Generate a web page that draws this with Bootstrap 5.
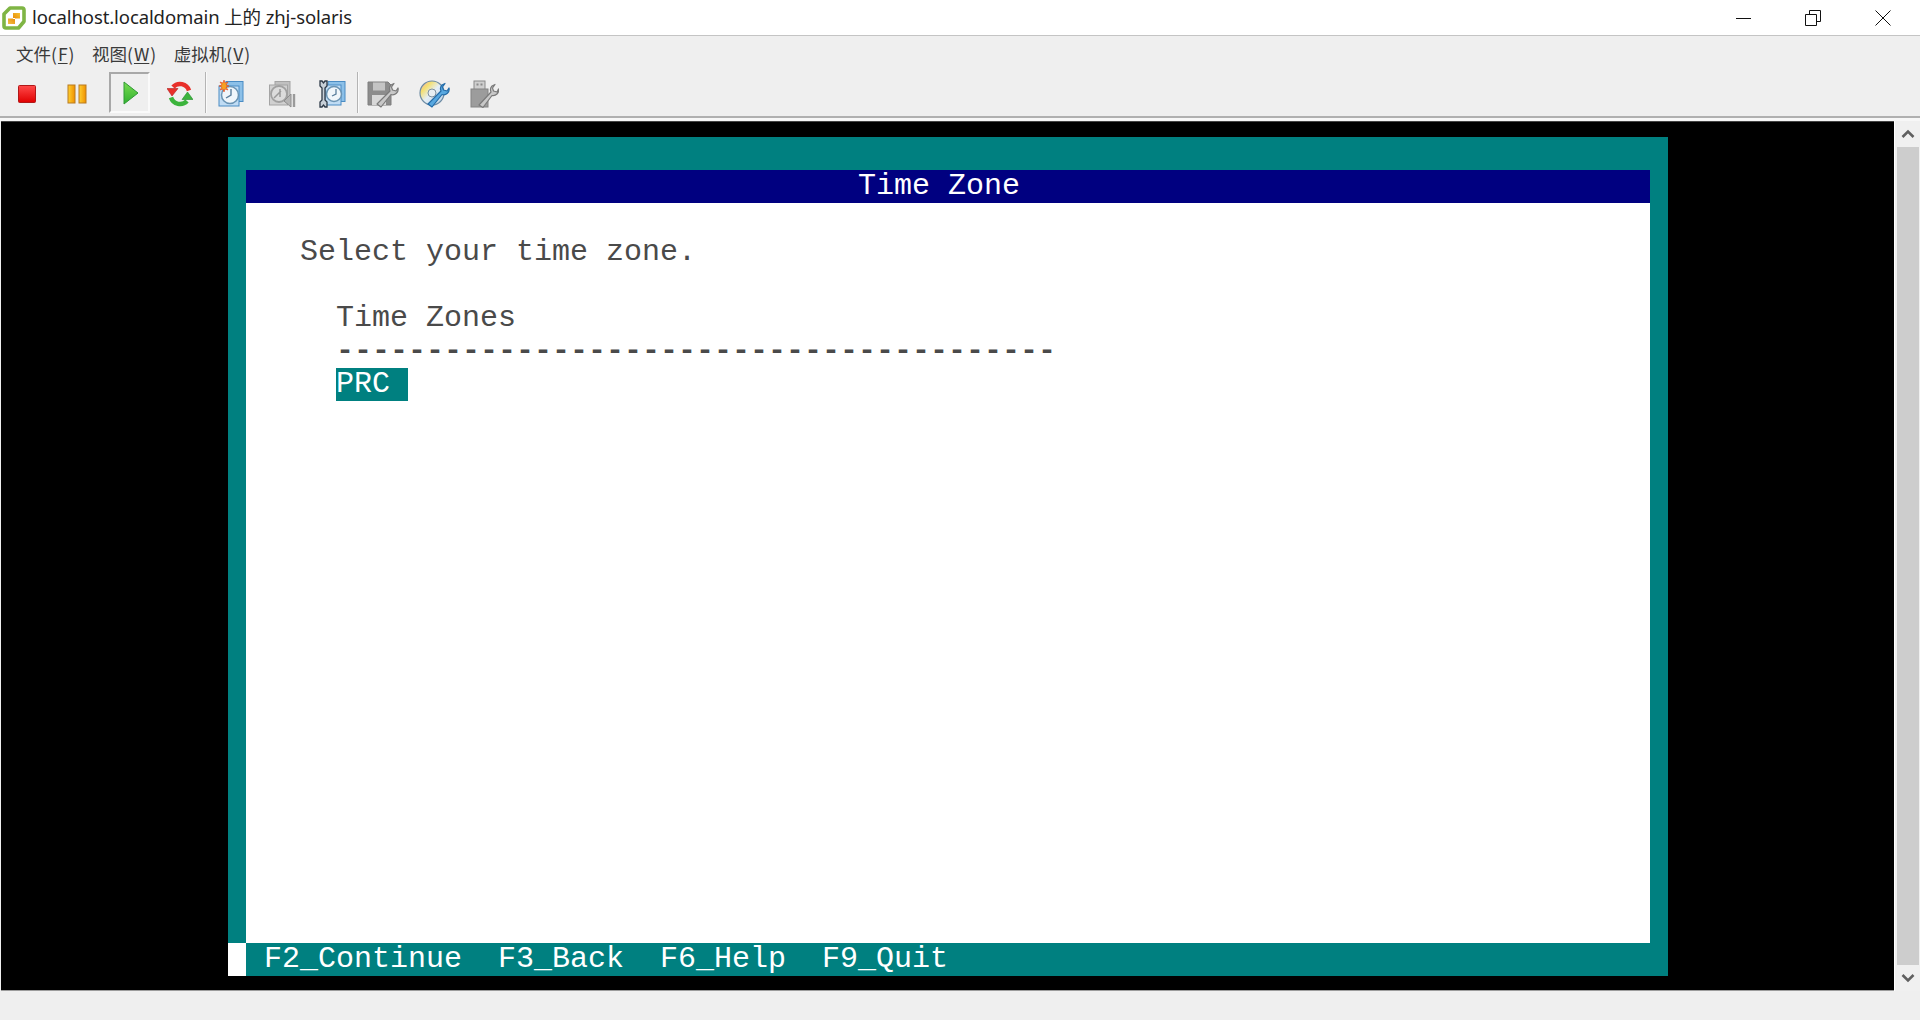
<!DOCTYPE html>
<html lang="zh-CN">
<head>
<meta charset="utf-8">
<title>localhost.localdomain 上的 zhj-solaris</title>
<link href="https://cdn.jsdelivr.net/npm/bootstrap@5.3.0/dist/css/bootstrap.min.css" rel="stylesheet">
<style>
html,body{height:100%;margin:0;overflow:hidden;background:#efefef}
.app-win{height:1020px;width:1920px}
.title-strip{height:36px;background:#fff;border-bottom:1px solid #c4c4c4}
.title-text{font:18.5px/1 "Noto Sans","Noto Sans CJK SC",sans-serif;color:#222;margin-left:6px;letter-spacing:-.1px}
.app-ico{margin-left:2px}
.win-ctl{width:70px;height:35px}
.win-set{margin-right:2px}
.menu-strip{height:36px;background:#efefef;padding-left:16px;gap:17.500px}
.menu-lbl{font:17.5px/26px "Noto Sans CJK SC",sans-serif;color:#3a3a3a}
.menu-lbl u{text-underline-offset:2px;padding:0 1px}
.tool-strip{height:44px;background:#efefef;padding-left:6px;gap:9.5px;padding-bottom:3px}
.tool-btn{width:41px;height:41px;padding-top:3px}
.tool-on{border:2px solid;border-color:#a8a8a8 #fafafa #fafafa #a8a8a8;margin-left:2px;padding:1px 0 0 3px}
.tool-sep{width:2px;height:41px;background:#b4b4b4;border-right:1px solid #fafafa;margin:0 -5.500px 0 -5.500px}
.rule-a{height:2px;background:#b0b0b0}
.rule-b{height:3px;background:#f7f7f7}
.work-area{height:870px;background:#000;margin-left:1px;border-bottom:1px solid #9c9c9c;border-top:1px solid #444}
.term-wrap{width:1893px;padding:15px 0 0 227px}
.term-box{width:1440px;height:839px;background:#008080}
.term-cap{height:33px}
.term-title{height:33px;margin:0 18px;background:#000080;color:#fff;padding-left:612px}
.term-page{height:740px;margin:0 18px;background:#fff;color:#4a4a4a}
.term-row{height:33px;white-space:pre}
.term-foot{height:33px;color:#fff}
.term-cell{width:18px;height:33px;background:#fff}
.term-keys{padding-left:18px;white-space:pre}
.term-title,.term-row,.term-keys{font:30px/33px "Liberation Mono",monospace}
.term-row.term-dash{font-weight:700}
.term-pick{display:inline-block;width:72px;height:33px;background:#008080;color:#fff}
.col-two{margin-left:90px}
.row-one{margin-left:54px}
.scroll-col{width:26px;background:#f0f0f0;border-left:1px solid #fff}
.scroll-top{height:26px}
.scroll-end{height:26px}
.scroll-thumb{background:#cdcdcd;margin:0 1px 0 2px}
.status-strip{height:29px;background:#efefef}
</style>
</head>
<body>
<div class="app-win d-flex flex-column">
  <div class="title-strip d-flex align-items-center">
    <svg class="app-ico" width="24" height="24" viewBox="0 0 24 24"><defs><linearGradient id="ga" x1="0" y1="1" x2="1" y2="0"><stop offset="0" stop-color="#f4c24a"/><stop offset=".5" stop-color="#e8900c"/><stop offset="1" stop-color="#f8c030"/></linearGradient></defs><path d="M8 2H20a2 2 0 0 1 2 2V15.500L16.500 22H4a2 2 0 0 1-2-2V8z" fill="#fff" stroke="#7fb544" stroke-width="3.600" stroke-linejoin="round"/><path d="M6 12.500h5V7h7v5.500h-5V18H6z" fill="url(#ga)"/><path d="M11 12.500l2 0" stroke="#fff" stroke-width="1"/></svg>
    <span class="title-text">localhost.localdomain 上的 zhj-solaris</span>
    <div class="ms-auto d-flex win-set">
      <div class="win-ctl d-flex align-items-center justify-content-center"><svg width="16" height="16" viewBox="0 0 16 16"><path d="M1 8.500h15" stroke="#111" fill="none"/></svg></div>
      <div class="win-ctl d-flex align-items-center justify-content-center"><svg width="16" height="16" viewBox="0 0 16 16"><path d="M.5 4.500h11v11H.5zM4.500 4.500V.5h11v11h-4" stroke="#111" fill="none"/></svg></div>
      <div class="win-ctl d-flex align-items-center justify-content-center"><svg width="16" height="16" viewBox="0 0 16 16"><path d="M.5.5l15 15M15.500.5l-15 15" stroke="#111" fill="none"/></svg></div>
    </div>
  </div>
  <div class="menu-strip d-flex align-items-center">
    <span class="menu-lbl">文件(<u>F</u>)</span>
    <span class="menu-lbl">视图(<u>W</u>)</span>
    <span class="menu-lbl">虚拟机(<u>V</u>)</span>
  </div>
  <div class="tool-strip d-flex align-items-center">
    <div class="tool-btn d-flex align-items-center justify-content-center"><svg width="18" height="18" viewBox="0 0 18 18"><defs><linearGradient id="gr" x1="0" y1="0" x2="0" y2="1"><stop offset="0" stop-color="#ff4a4a"/><stop offset="1" stop-color="#e00000"/></linearGradient></defs><rect x=".5" y=".5" width="17" height="17" rx="1" fill="url(#gr)" stroke="#b01818"/></svg></div>
    <div class="tool-btn d-flex align-items-center justify-content-center"><svg width="20" height="20" viewBox="0 0 20 20"><defs><linearGradient id="go" x1="0" y1="0" x2="1" y2="0"><stop offset="0" stop-color="#ffd030"/><stop offset="1" stop-color="#f09000"/></linearGradient></defs><rect x="1" y="1" width="7" height="18" fill="url(#go)" stroke="#b87a20"/><rect x="12" y="1" width="7" height="18" fill="url(#go)" stroke="#b87a20"/></svg></div>
    <div class="tool-btn tool-on d-flex align-items-center justify-content-center"><svg width="18" height="24" viewBox="0 0 18 24"><defs><linearGradient id="gg" x1="0" y1="0" x2="0" y2="1"><stop offset="0" stop-color="#78dc50"/><stop offset="1" stop-color="#30b030"/></linearGradient></defs><path d="M2 1l14 11L2 23z" fill="url(#gg)" stroke="#2f9a35" stroke-linejoin="round"/></svg></div>
    <div class="tool-btn d-flex align-items-center justify-content-center"><svg width="26" height="26" viewBox="0 0 26 26"><path d="M22 9.500A9.500 9.500 0 0 0 6 6" fill="none" stroke="#e8302a" stroke-width="4.500"/><path d="M0 7.500H11L5 15z" fill="#e8302a" stroke="#b02020" stroke-width=".6"/><path d="M4 16.500A9.500 9.500 0 0 0 20 20" fill="none" stroke="#3cb43c" stroke-width="4.500"/><path d="M15 18.500H26L20.500 11z" fill="#3cb43c" stroke="#208a28" stroke-width=".6"/></svg></div>
    <div class="tool-sep"></div>
    <div class="tool-btn d-flex align-items-center justify-content-center"><svg width="28" height="28" viewBox="0 0 28 28"><rect x="9" y="1.500" width="17" height="20" fill="#8cc0e8" stroke="#4a8cc4"/><rect x="2" y="6" width="20" height="20" fill="#c0dcf4" stroke="#4a8cc4"/><circle cx="13" cy="15" r="8.500" fill="#f0f6fb" stroke="#6a94b4" stroke-width="1.500"/><path d="M14 9v6l-5 3" fill="none" stroke="#5a7e9c" stroke-width="1.400"/><path d="M7 0l1 3 3-1-2 3 3 1-3 1 2 3-3-1-1 3-1-3-3 1 2-3-3-1 3-1-2-3 3 1z" fill="#f6a020" stroke="#e04020" stroke-width=".6"/></svg></div>
    <div class="tool-btn d-flex align-items-center justify-content-center"><svg width="28" height="28" viewBox="0 0 28 28"><rect x="7" y="1.500" width="15" height="20" fill="#c0c0c0" stroke="#a4a4a4"/><rect x="1.500" y="5" width="18" height="20" fill="#d0d0d0" stroke="#a4a4a4"/><circle cx="11" cy="14" r="8" fill="#dcdcdc" stroke="#a0a0a0" stroke-width="1.800"/><path d="M6 18l7-7M12 9v8" stroke="#9a9a9a" stroke-width="1.500" fill="none"/><path d="M16 21L23 14V27z" fill="#b4b4b4" stroke="#8e8e8e"/><path d="M26 14V27" stroke="#9a9a9a" stroke-width="2.400"/></svg></div>
    <div class="tool-btn d-flex align-items-center justify-content-center"><svg width="28" height="28" viewBox="0 0 28 28"><rect x="10" y="1.500" width="17" height="20" fill="#8cc0e8" stroke="#4a8cc4"/><rect x="7" y="5" width="16" height="20" fill="#c0dcf4" stroke="#4a8cc4"/><circle cx="16" cy="14" r="7.500" fill="#f0f6fb" stroke="#6a94b4" stroke-width="1.500"/><path d="M18 9v5l-4 2" fill="none" stroke="#5a7e9c" stroke-width="1.300"/><path d="M2 1h2l1.500 2L7 1h2v5L7 8v12l2 2v5H7l-1.500-2L4 27H2v-5l2-2V8L2 6z" fill="#c8d0d8" stroke="#2e3a48" stroke-width="1.300"/></svg></div>
    <div class="tool-sep"></div>
    <div class="tool-btn d-flex align-items-center justify-content-center"><svg width="32" height="28" viewBox="0 0 32 28"><path d="M1 2h20l3 3v20H1z" fill="#8c8c8c" stroke="#7e7e7e"/><rect x="6" y="2.500" width="12" height="8" fill="#c4c4c4"/><rect x="5" y="15" width="14" height="10" fill="#d8d8d8"/><path d="M10 24L23 11a5.500 5.500 0 0 1 1-6l3-1.500-2.500 3.500 1 3 3.500 1 2-3a5.500 5.500 0 0 1-7 6.500L14 27z" fill="#c8c8c8" stroke="#7a7a7a" stroke-width="1.200" stroke-linejoin="round"/></svg></div>
    <div class="tool-btn d-flex align-items-center justify-content-center"><svg width="32" height="28" viewBox="0 0 32 28"><defs><linearGradient id="gc" x1="0" y1="0" x2="1" y2="1"><stop offset="0" stop-color="#f0a0d0"/><stop offset=".25" stop-color="#f4e070"/><stop offset=".5" stop-color="#e4eef6"/><stop offset="1" stop-color="#b8d0e4"/></linearGradient></defs><circle cx="14" cy="13" r="12" fill="url(#gc)" stroke="#6e8ca4" stroke-width="1.200"/><circle cx="14" cy="13" r="4" fill="#e8eef2" stroke="#7e909e"/><path d="M10 24L23 11a5.500 5.500 0 0 1 1-6l3-1.500-2.500 3.500 1 3 3.500 1 2-3a5.500 5.500 0 0 1-7 6.500L14 27z" fill="#58a8e0" stroke="#246ca8" stroke-width="1.200" stroke-linejoin="round"/></svg></div>
    <div class="tool-btn d-flex align-items-center justify-content-center"><svg width="30" height="28" viewBox="0 0 30 28"><rect x="5" y="1" width="11" height="9" fill="#cfcfcf" stroke="#8a8a8a"/><rect x="7.500" y="3.500" width="2" height="2" fill="#8a8a8a"/><rect x="11.500" y="3.500" width="2" height="2" fill="#8a8a8a"/><rect x="2" y="9" width="17" height="18" fill="#9c9c9c" stroke="#848484"/><path d="M10 25L22 12a5.500 5.500 0 0 1 1-6l3-1.500-2.500 3.500 1 3 3.500 1 1.500-3a5.500 5.500 0 0 1-6.500 6.500L14 27.500z" fill="#c8c8c8" stroke="#7a7a7a" stroke-width="1.200" stroke-linejoin="round"/></svg></div>
  </div>
  <div class="rule-a"></div>
  <div class="rule-b"></div>
  <div class="d-flex">
    <div class="work-area flex-grow-1">
      <div class="term-wrap">
        <div class="term-box">
          <div class="term-cap"></div>
          <div class="term-title">Time Zone</div>
          <div class="term-page">
            <div class="term-row"></div>
            <div class="term-row row-one">Select your time zone.</div>
            <div class="term-row"></div>
            <div class="term-row col-two">Time Zones</div>
            <div class="term-row term-dash col-two">----------------------------------------</div>
            <div class="term-row col-two"><span class="term-pick">PRC</span></div>
          </div>
          <div class="term-foot d-flex"><div class="term-cell"></div><div class="term-keys">F2_Continue  F3_Back  F6_Help  F9_Quit</div></div>
        </div>
      </div>
    </div>
    <div class="scroll-col d-flex flex-column">
      <div class="scroll-top d-flex align-items-center justify-content-center"><svg width="14" height="10" viewBox="0 0 14 10"><path d="M1.500 8L7 2.500 12.500 8" fill="none" stroke="#606060" stroke-width="2.600"/></svg></div>
      <div class="scroll-thumb flex-grow-1"></div>
      <div class="scroll-end d-flex align-items-center justify-content-center"><svg width="14" height="10" viewBox="0 0 14 10"><path d="M1.500 2L7 7.500 12.500 2" fill="none" stroke="#606060" stroke-width="2.600"/></svg></div>
    </div>
  </div>
  <div class="status-strip"></div>
</div>
</body>
</html>
